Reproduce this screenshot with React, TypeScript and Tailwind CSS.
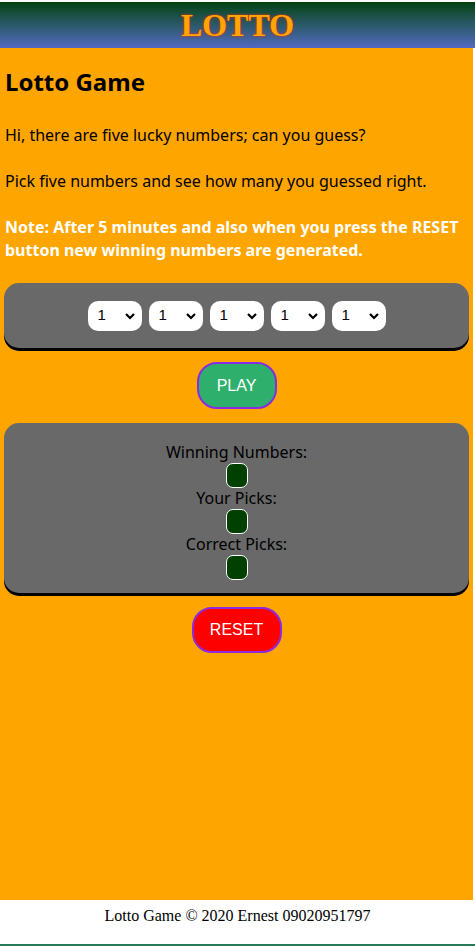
const comic = { fontFamily: '"Comic Sans MS", "Noto Sans", sans-serif' };

const Picker = () => (
    <select
        defaultValue="1"
        className="w-[54px] h-[30px] rounded-[10px] bg-white pl-[10px] text-[15px] text-black appearance-none"
        style={{
            fontFamily: '"Liberation Sans", Arial, sans-serif',
            backgroundImage:
                "url(\"data:image/svg+xml;utf8,<svg xmlns='http://www.w3.org/2000/svg' width='12' height='8' viewBox='0 0 12 8'><path d='M2 2l4 4 4-4' fill='none' stroke='black' stroke-width='2.2'/></svg>\")",
            backgroundRepeat: 'no-repeat',
            backgroundPosition: 'right 6px center',
        }}
    >
        {[1, 2, 3, 4, 5, 6, 7, 8, 9, 10].map((n) => (
            <option key={n} value={n}>{n}</option>
        ))}
    </select>
);

const Slot = () => (
    <div className="w-[22px] h-[25px] rounded-[7px] border border-white bg-[#004000] mx-auto" />
);

const App = () => {
    return (
        <div className="min-h-[948px] flex flex-col bg-white">
            <header className="mt-[2px] h-[46px] flex items-center justify-center bg-gradient-to-b from-[#03420a] to-[#5268c2]">
                <span
                    className="text-[32px] font-bold text-[#ffa500] leading-none"
                    style={{ fontFamily: '"Liberation Serif", "Times New Roman", serif', textShadow: '0 0 3px #e0301a, 0 0 1px #e0301a' }}
                >
                    LOTTO
                </span>
            </header>

            <main className="h-[852px] bg-[#ffa500] mr-[2px] px-[4px]" style={comic}>
                <h1 className="text-[24px] font-bold text-black mt-[19px] ml-[1px] leading-[30px]">Lotto Game</h1>
                <p className="text-[16px] text-black mt-[26px] ml-[1px] leading-[24px]">Hi, there are five lucky numbers; can you guess?</p>
                <p className="text-[16px] text-black mt-[22px] ml-[1px] leading-[24px]">Pick five numbers and see how many you guessed right.</p>
                <p className="text-[16px] font-bold text-white mt-[23px] ml-[1px] leading-[23px]">
                    Note: After 5 minutes and also when you press the RESET button new winning numbers are generated.
                </p>

                <div className="mt-[21px] h-[65px] rounded-[15px] bg-[#696969] shadow-[0_3px_0_#000] flex items-center justify-center gap-[7px]">
                    <Picker />
                    <Picker />
                    <Picker />
                    <Picker />
                    <Picker />
                </div>

                <div className="flex justify-center mt-[14px]">
                    <button
                        className="w-[80px] h-[47px] rounded-[20px] border-2 border-[#8a2be2] bg-[#2eb06c] text-white text-[16px]"
                        style={{ fontFamily: '"Liberation Sans", Arial, sans-serif' }}
                    >
                        PLAY
                    </button>
                </div>

                <div className="mt-[14px] h-[170px] rounded-[15px] bg-[#696969] shadow-[0_3px_0_#000] pt-[19px] text-center text-[16px] text-black leading-[21px]">
                    <div>Winning Numbers:</div>
                    <Slot />
                    <div>Your Picks:</div>
                    <Slot />
                    <div>Correct Picks:</div>
                    <Slot />
                </div>

                <div className="flex justify-center mt-[14px]">
                    <button
                        className="w-[90px] h-[46px] rounded-[20px] border-2 border-[#8a2be2] bg-[#ff0000] text-white text-[16px]"
                        style={{ fontFamily: '"Liberation Sans", Arial, sans-serif' }}
                    >
                        RESET
                    </button>
                </div>
            </main>

            <footer
                className="h-[46px] bg-white text-center text-[16px] text-black pt-[4px] border-b-2 border-[#267a58]"
                style={{ fontFamily: '"Liberation Serif", "Times New Roman", serif' }}
            >
                Lotto Game © 2020 Ernest 09020951797
            </footer>
        </div>
    );
};

export default App;
